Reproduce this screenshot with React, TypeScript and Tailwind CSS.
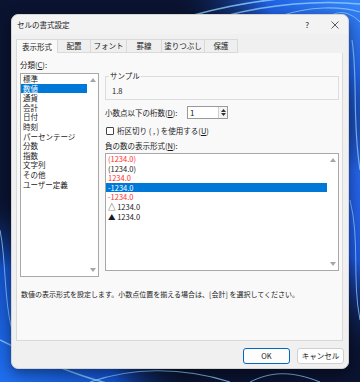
import React from "react";

const cats = ["標準", "数値", "通貨", "会計", "日付", "時刻", "パーセンテージ", "分数", "指数", "文字列", "その他", "ユーザー定義"];

const negs = [
  { t: "(1234.0)", c: "text-[#ff2d2d]" },
  { t: "(1234.0)", c: "text-[#1a1a1a]" },
  { t: "1234.0", c: "text-[#ff2d2d]" },
  { t: "-1234.0", c: "text-white bg-[#0078d7]" },
  { t: "-1234.0", c: "text-[#ff2d2d]" },
  { t: "△ 1234.0", c: "text-[#1a1a1a]" },
  { t: "▲ 1234.0", c: "text-[#1a1a1a]" },
];

const tabs = [
  { t: "表示形式", w: "w-[42px]" },
  { t: "配置", w: "w-[33px]" },
  { t: "フォント", w: "w-[36px]" },
  { t: "罫線", w: "w-[35px]" },
  { t: "塗りつぶし", w: "w-[43px]" },
  { t: "保護", w: "w-[33px]" },
];

function Arrow({ down }: { down?: boolean }) {
  return (
    <svg width="6" height="4" viewBox="0 0 6 4">
      <polygon points={down ? "0,0 6,0 3,4" : "0,4 6,4 3,0"} fill="#a6a6a6" />
    </svg>
  );
}

function Wallpaper() {
  return (
    <svg className="absolute inset-0" width="360" height="382" viewBox="0 0 360 382">
      <defs>
        <radialGradient id="r1" cx="420" cy="170" r="200" gradientUnits="userSpaceOnUse">
          <stop offset="0" stopColor="#2f74f8" />
          <stop offset="0.55" stopColor="#1d55dc" />
          <stop offset="1" stopColor="#0b1431" stopOpacity="0" />
        </radialGradient>
        <radialGradient id="r2" cx="0" cy="382" r="190" gradientUnits="userSpaceOnUse">
          <stop offset="0" stopColor="#1f6ff0" />
          <stop offset="0.6" stopColor="#1450c8" />
          <stop offset="1" stopColor="#0b1431" stopOpacity="0" />
        </radialGradient>
        <radialGradient id="r3" cx="360" cy="-20" r="190" gradientUnits="userSpaceOnUse">
          <stop offset="0" stopColor="#3b8cff" />
          <stop offset="0.5" stopColor="#1f5fe0" />
          <stop offset="1" stopColor="#0b1431" stopOpacity="0" />
        </radialGradient>
      </defs>
      <rect width="360" height="382" fill="#0a1330" />
      <rect width="360" height="382" fill="url(#r1)" />
      <rect width="360" height="382" fill="url(#r2)" />
      <rect width="360" height="382" fill="url(#r3)" />
      <g fill="none" stroke="#8fd0ff" strokeOpacity="0.8">
        <path d="M190 16 C 240 2, 300 -6, 360 -4" strokeWidth="1.6" />
        <path d="M225 16 C 270 4, 320 0, 360 4" strokeWidth="1.3" />
        <path d="M280 16 C 310 6, 340 6, 360 12" strokeWidth="1.1" />
        <path d="M330 16 C 340 10, 350 12, 360 22" strokeWidth="1" />
        <path d="M352 40 C 358 80, 352 120, 360 170" strokeWidth="1.2" />
        <path d="M350 200 C 360 240, 352 280, 360 320" strokeWidth="1" />
        <path d="M0 340 C 40 360, 80 378, 120 386" strokeWidth="1.4" />
        <path d="M90 382 C 130 368, 180 366, 230 382" strokeWidth="1.2" />
        <path d="M250 382 C 270 372, 290 370, 320 382" strokeWidth="1" />
        <path d="M0 230 C 6 260, 4 300, 12 330" strokeWidth="1" />
      </g>
    </svg>
  );
}

export default function App() {
  return (
    <div className="relative w-[360px] h-[382px] overflow-hidden font-['Noto_Sans_CJK_JP','Noto_Sans',sans-serif] text-[7.5px] text-[#1a1a1a]">
      <Wallpaper />

      {/* dialog window */}
      <div className="absolute left-[11px] top-[14px] w-[338px] h-[355px] flex flex-col bg-[#f0f0f0] rounded-[7px] shadow-[0_4px_14px_rgba(0,0,0,0.45)] border border-[#d4d4d4]">
        <div className="h-[19px] flex items-center pl-[5px] pr-[9px] bg-[#f3f3f3] rounded-t-[7px]">
          <span className="leading-[10px] text-[7.5px]">セルの書式設定</span>
          <span className="ml-auto text-[8px] leading-[10px]">?</span>
          <svg className="ml-[22px]" width="8" height="8" viewBox="0 0 8 8">
            <path d="M0.5 0.5 L7.5 7.5 M7.5 0.5 L0.5 7.5" stroke="#333" strokeWidth="0.8" />
          </svg>
        </div>

        <div className="mt-[5px] ml-[4px] flex h-[14px]">
          {tabs.map((tb, i) => (
            <div
              key={tb.t}
              className={`${tb.w} h-[14px] flex items-center justify-center leading-[10px] border-t border-r border-[#d9d9d9] ${i === 0 ? "border-l bg-[#f9f9f9]" : "bg-[#efefef] border-b"}`}
            >
              {tb.t}
            </div>
          ))}
        </div>

        {/* tab page */}
        <div className="ml-[4px] w-[327px] h-[288px] bg-[#f9f9f9] border border-t-0 border-[#d9d9d9] flex flex-col pl-[3px]">
          <div className="flex gap-[6px]">
            <div className="w-[79px] flex flex-col">
              <div className="mt-[7px] h-[10px] leading-[10px]">
                分類(<span className="underline">C</span>):
              </div>
              <div className="mt-[3px] h-[204px] bg-white border border-[#a8a8a8] flex">
                <div className="flex-1 flex flex-col">
                  {cats.map((c, i) => (
                    <div key={c} className={`h-[9.6px] leading-[9.6px] pl-[2px] ${i === 1 ? "bg-[#0078d7] text-white" : ""}`}>
                      {c}
                    </div>
                  ))}
                </div>
                <div className="w-[11px] flex flex-col items-center justify-between py-[4px]">
                  <Arrow />
                  <Arrow down />
                </div>
              </div>
            </div>

            <div className="w-[234px] flex flex-col">
              <div className="relative mt-[23px] h-[24px] border border-[#dcdcdc]">
                <span className="absolute -top-[6px] left-[3px] px-[1px] bg-[#f9f9f9] leading-[10px]">サンプル</span>
                <div className="pt-[9px] pl-[6px] leading-[10px]">1.8</div>
              </div>
              <div className="mt-[6px] h-[13px] flex items-center">
                <span className="leading-[10px]">
                  小数点以下の桁数(<span className="underline">D</span>):
                </span>
                <div className="ml-auto mr-[111px] w-[41px] h-[13px] bg-white border border-[#9a9a9a] flex">
                  <span className="flex-1 pl-[2px] leading-[11px] text-[8px]">1</span>
                  <div className="w-[9px] border-l border-[#d0d0d0] flex flex-col items-center justify-center gap-[1px] bg-[#f4f4f4]">
                    <svg width="5" height="3" viewBox="0 0 5 3"><polygon points="0,3 5,3 2.5,0" fill="#333" /></svg>
                    <svg width="5" height="3" viewBox="0 0 5 3"><polygon points="0,0 5,0 2.5,3" fill="#333" /></svg>
                  </div>
                </div>
              </div>
              <div className="mt-[7px] h-[9px] flex items-center gap-[3px] pl-[1px]">
                <div className="w-[8px] h-[8px] border border-[#444] bg-white rounded-[1px]" />
                <span className="leading-[10px]">
                  桁区切り ( , ) を使用する(<span className="underline">U</span>)
                </span>
              </div>
              <div className="mt-[6px] h-[10px] leading-[10px]">
                負の数の表示形式(<span className="underline">N</span>):
              </div>
              <div className="mt-[2px] h-[118px] bg-white border border-[#a8a8a8] flex">
                <div className="flex-1 flex flex-col">
                  {negs.map((n, i) => (
                    <div key={i} className={`h-[9.6px] leading-[9.6px] pl-[2px] text-[7.5px] ${n.c}`}>
                      {n.t}
                    </div>
                  ))}
                </div>
                <div className="w-[11px] flex flex-col items-center justify-between py-[4px]">
                  <Arrow />
                  <Arrow down />
                </div>
              </div>
            </div>
          </div>
          <div className="mt-[12px] pl-[1px] leading-[10px] text-[7px]">
            数値の表示形式を設定します。小数点位置を揃える場合は、[会計] を選択してください。
          </div>
        </div>

        <div className="mt-[7px] flex justify-end gap-[7px] pr-[4px]">
          <button className="w-[47px] h-[16px] bg-[#fdfdfd] border border-[#0067c0] rounded-[3px] text-[7.5px] leading-[10px]">
            OK
          </button>
          <button className="w-[47px] h-[16px] bg-[#fdfdfd] border border-[#d0d0d0] rounded-[3px] text-[7.5px] leading-[10px]">
            キャンセル
          </button>
        </div>
      </div>
    </div>
  );
}
